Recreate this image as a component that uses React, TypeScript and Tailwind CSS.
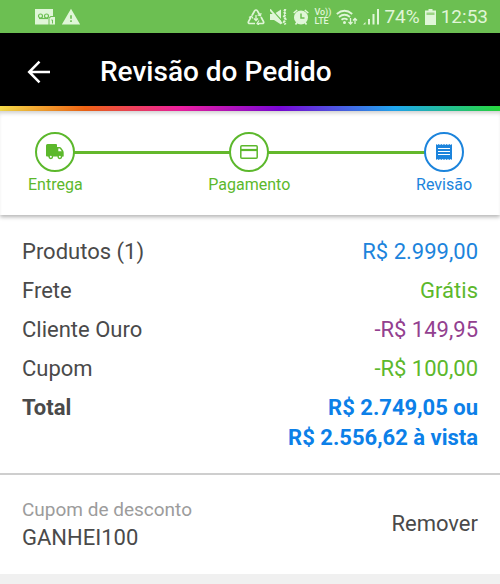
import { useState, type ReactNode } from "react";
import { MdWarning } from "react-icons/md";

const rows = [
  { label: "Produtos (1)", value: "R$ 2.999,00", color: "text-[#1c84dc]" },
  { label: "Frete", value: "Grátis", color: "text-[#5cb82c]" },
  { label: "Cliente Ouro", value: "-R$ 149,95", color: "text-[#93408f]" },
  { label: "Cupom", value: "-R$ 100,00", color: "text-[#5cb82c]" },
];

function VoicemailIcon() {
  return (
    <svg className="w-5 h-4" viewBox="0 0 20 16" fill="none">
      <path d="M0 0h18v7h-2.500l-2 2v6.500H0z" fill="currentColor" />
      <circle cx="5.500" cy="7" r="2" stroke="#6cbf52" strokeWidth="1.200" />
      <circle cx="11.500" cy="7" r="2" stroke="#6cbf52" strokeWidth="1.200" />
      <path d="M4 9.500h9" stroke="#6cbf52" strokeWidth="1.200" />
      <path d="M14.500 9.500 16 8h4v7.500h-5.500z" fill="currentColor" />
      <path d="M16.300 11h1.200v3.500" stroke="#6cbf52" />
    </svg>
  );
}

function DataSaverIcon() {
  return (
    <svg className="w-[18px] h-4" viewBox="0 0 18 16" fill="none" stroke="currentColor" strokeWidth="1.700">
      <path d="M5 6.500 7.500 2q1.500-2 3 0L13 6.500M14 8l2.500 4.500q.8 2-1.500 2h-4.500M8 14.500H3q-2.300 0-1.500-2L4 8" />
      <path d="M2 8.500 4.500 7 6 9.500M12 11.500l-2 3 2 1.500M10.500 6l3 .8.500-2.800" strokeWidth="1.200" />
      <path d="M9 6v5M7 9.500l2 2 2-2" strokeWidth="1.300" />
    </svg>
  );
}

function VibrateMuteIcon() {
  return (
    <svg className="w-[18px] h-4" viewBox="0 0 18 16" fill="none" stroke="currentColor">
      <path d="M0 5h4l7-4.500v15L4 11H0z" fill="currentColor" stroke="none" />
      <path d="M2 1 13 13" stroke="#6cbf52" strokeWidth="1.200" />
      <path d="m0 .5 12 14" strokeWidth="1.800" />
      <path d="m15.500 0-1.500 2.700 1.500 2.500-1.500 2.500 1.500 2.600L14 13l1.500 2.500" strokeWidth="2.200" strokeDasharray="2.500 .8" />
    </svg>
  );
}

function AlarmIcon() {
  return (
    <svg className="w-4 h-4" viewBox="0 0 16 16" fill="none">
      <circle cx="8" cy="8.500" r="7" fill="currentColor" />
      <path d="m.7 4 3.500-3M15.300 4l-3.500-3M2.500 15.500l1.500-2M13.500 15.500l-1.500-2" stroke="currentColor" strokeWidth="1.600" />
      <path d="M8 4.500v4.500h3.500" stroke="#6cbf52" strokeWidth="1.500" />
    </svg>
  );
}

function WifiIcon() {
  return (
    <svg className="w-[22px] h-4" viewBox="0 0 22 16" fill="none" stroke="currentColor" strokeWidth="1.800">
      <path d="M.8 5q7.700-6.500 15.400 0M3 8q5.500-4.500 11 0M5.500 10.800q3-2.300 6 0" />
      <circle cx="8.500" cy="13.500" r="1.500" fill="currentColor" stroke="none" />
      <path d="M14.500 9v6M12.500 13l2 2 2-2M19 15V9.500M17 11.500l2-2 2 2" strokeWidth="1.300" />
    </svg>
  );
}

function SignalIcon() {
  return (
    <svg className="w-4 h-4" viewBox="0 0 16 16" fill="currentColor">
      <path d="M0 15.500 2.500 13v2.500zM5 10h2v5.500H5zM9.500 5h2v10.500h-2zM14 0h2v15.500h-2z" />
    </svg>
  );
}

function BatteryIcon() {
  return (
    <svg className="w-[11px] h-4" viewBox="0 0 11 16" fill="currentColor">
      <path d="M3.500 0h4v1.500H11V16H0V1.500h3.500z" />
      <path d="M1.500 3.500h8V6h-8z" fill="#9bd485" />
    </svg>
  );
}

function BackIcon() {
  return (
    <svg className="w-6 h-6" viewBox="0 0 24 24" fill="none" stroke="currentColor" strokeWidth="2.500">
      <path d="M23 12H2.500M12.500 1.700 2.200 12l10.300 10.300" />
    </svg>
  );
}

function TruckIcon() {
  return (
    <svg className="w-[18px] h-4" viewBox="0 0 18 16" fill="currentColor">
      <path d="M1.500 0h8.500q1 0 1 1v2h2.500q1 0 1.600.8l2 2.700q.6 1 .6 2v4h-1.200a2.300 2.300 0 0 1-4.500 0H7a2.300 2.300 0 0 1-4.500 0H1q-1 0-1-1v-10Q0 0 1.500 0z" />
      <circle cx="4.800" cy="12.800" r="2.400" />
      <circle cx="13.800" cy="12.800" r="2.400" />
      <path d="M12.300 4.500h1.500l2 2.700h-3.500z" fill="#fff" />
      <circle cx="4.800" cy="12.800" r="1" fill="#fff" />
      <circle cx="13.800" cy="12.800" r="1" fill="#fff" />
    </svg>
  );
}

function CardIcon() {
  return (
    <svg className="w-[18px] h-[14px]" viewBox="0 0 18 14" fill="none" stroke="currentColor">
      <rect x=".8" y=".8" width="16.400" height="12.400" rx="1" strokeWidth="1.500" />
      <path d="M1 5h16" strokeWidth="2.200" />
    </svg>
  );
}

function ReceiptIcon() {
  return (
    <svg className="w-4 h-4" viewBox="0 0 16 16">
      <path d="M0 0l1.300 1L2.700 0 4 1l1.300-1 1.400 1L8 0l1.300 1 1.400-1L12 1l1.300-1 1.400 1L16 0v16l-1.300-1-1.400 1-1.300-1-1.300 1-1.400-1L8 16l-1.300-1-1.400 1L4 15l-1.300 1-1.400-1L0 16z" fill="currentColor" />
      <path d="M2 4.500h12M2 7.500h12M2 10.500h12" stroke="#fff" />
    </svg>
  );
}

function Step({ label, color, children }: { label: string; color: string; children: ReactNode }) {
  return (
    <li className={`relative flex flex-col items-center ${color}`}>
      <span className="w-10 h-10 rounded-full border-2 border-current bg-white flex items-center justify-center">
        {children}
      </span>
      <span className="mt-[3px] text-[16px] leading-5">{label}</span>
    </li>
  );
}

export default function App() {
  const [coupon, setCoupon] = useState("GANHEI100");

  return (
    <div className="min-h-screen bg-[#f0f0f0] font-['Roboto',sans-serif] text-[#4a4a4a]">
      {/* Status bar */}
      <div className="h-[33px] bg-[#6cbf52] text-[#e0f6d8] pl-[35px] pr-3 flex items-center justify-between">
        <div className="flex items-center gap-1.5">
          <VoicemailIcon />
          <MdWarning className="w-5 h-5" />
        </div>
        <div className="flex items-center gap-[5px]">
          <DataSaverIcon />
          <VibrateMuteIcon />
          <AlarmIcon />
          <span className="flex flex-col text-[9px] leading-[9px] font-medium">
            <span>Vo))</span>
            <span>LTE</span>
          </span>
          <WifiIcon />
          <SignalIcon />
          <span className="text-[19px] leading-6">74%</span>
          <BatteryIcon />
          <span className="text-[19px] leading-6">12:53</span>
        </div>
      </div>

      <header className="h-[73px] bg-black text-white flex items-center pt-[5px] pl-[27px] gap-[49px]">
        <button type="button" aria-label="Voltar">
          <BackIcon />
        </button>
        <h1 className="text-[28px] leading-8 font-medium">Revisão do Pedido</h1>
      </header>
      <div className="h-[5px] bg-[linear-gradient(90deg,#f5dc4a_0%,#f06414_17%,#ee20a0_36%,#7a08d8_56%,#20a8f0_79%,#28d83c_100%)]" />

      {/* Progress */}
      <nav className="relative bg-white px-7 pt-[21px] pb-5 shadow-[0_2px_4px_rgba(0,0,0,0.3),inset_0_4px_4px_-2px_rgba(0,0,0,0.2)]">
        <div className="absolute left-14 right-14 top-10 h-[3px] bg-[#64b82c]" />
        <ol className="flex justify-between">
          <Step label="Entrega" color="text-[#5cb82c]">
            <TruckIcon />
          </Step>
          <Step label="Pagamento" color="text-[#5cb82c]">
            <CardIcon />
          </Step>
          <Step label="Revisão" color="text-[#1c84dc]">
            <ReceiptIcon />
          </Step>
        </ol>
      </nav>

      <main className="bg-white">
        <dl className="px-[22px] pt-[22px] pb-5 flex flex-col gap-[9px] text-[22px] leading-[30px]">
          {rows.map((row) => (
            <div key={row.label} className="flex justify-between">
              <dt>{row.label}</dt>
              <dd className={row.color}>{row.value}</dd>
            </div>
          ))}
          <div className="flex justify-between font-bold">
            <dt>Total</dt>
            <dd className="text-right text-[#0c80e8]">
              R$ 2.749,05 ou
              <br />
              R$ 2.556,62 à vista
            </dd>
          </div>
        </dl>

        {/* Coupon */}
        <section className="border-t-2 border-[#cecece] px-[22px] pt-[21px] pb-[22px] flex items-center justify-between">
          <div>
            <p className="text-[19px] leading-7 text-[#9c9c9c]">Cupom de desconto</p>
            <p className="h-7 text-[22px] leading-7">{coupon}</p>
          </div>
          <button type="button" onClick={() => setCoupon("")} className="text-[22px] leading-7">
            Remover
          </button>
        </section>
      </main>
    </div>
  );
}
